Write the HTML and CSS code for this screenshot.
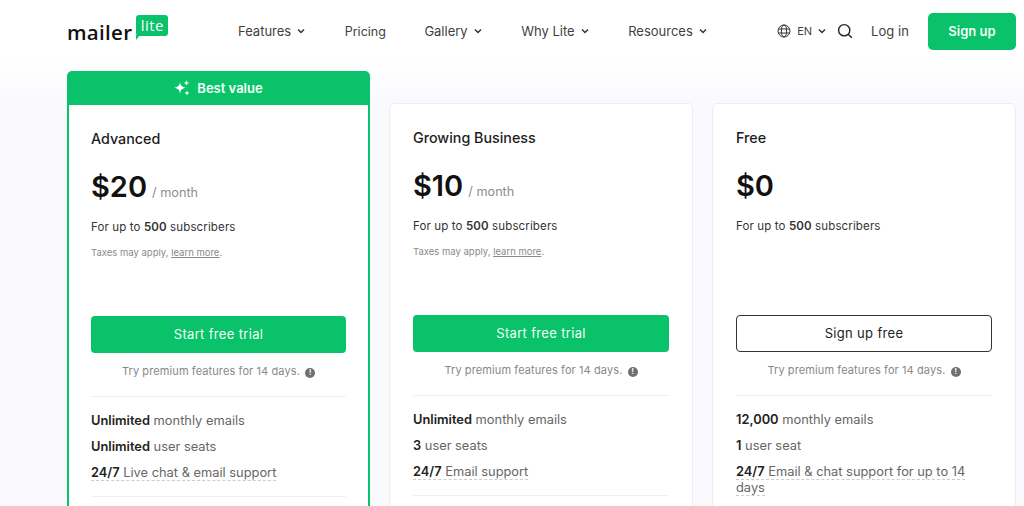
FILE: index.html
```html
<!DOCTYPE html>
<html lang="en">
<head>
<meta charset="utf-8">
<title>MailerLite pricing</title>
<link rel="stylesheet" href="styles.css">
</head>
<body>
<header class="topbar">
  <a class="logo">
    <span class="logo-word">mailer</span>
    <span class="logo-badge">lite</span>
  </a>
  <nav class="nav">
    <a class="nav-item">Features <svg class="chev" viewBox="0 0 8 6"><path d="M1 1.5 4 4.5 7 1.5"/></svg></a>
    <a class="nav-item nav-plain">Pricing</a>
    <a class="nav-item">Gallery <svg class="chev" viewBox="0 0 8 6"><path d="M1 1.5 4 4.5 7 1.5"/></svg></a>
    <a class="nav-item">Why Lite <svg class="chev" viewBox="0 0 8 6"><path d="M1 1.5 4 4.5 7 1.5"/></svg></a>
    <a class="nav-item">Resources <svg class="chev" viewBox="0 0 8 6"><path d="M1 1.5 4 4.5 7 1.5"/></svg></a>
  </nav>
  <div class="actions">
    <a class="lang">
      <svg class="globe" viewBox="0 0 14 14"><circle cx="7" cy="7" r="6"/><ellipse cx="7" cy="7" rx="2.7" ry="6"/><path d="M1.3 5h11.4M1.3 9h11.4"/></svg>
      EN
      <svg class="chev" viewBox="0 0 8 6"><path d="M1 1.5 4 4.5 7 1.5"/></svg>
    </a>
    <svg class="search" viewBox="0 0 16 16"><circle cx="7.2" cy="7.2" r="5.6"/><path d="M11.2 11.2 14.8 14.8"/></svg>
    <a class="login">Log in</a>
    <a class="signup">Sign up</a>
  </div>
</header>
<main class="plans">
  <article class="plan plan-featured">
    <div class="ribbon">
      <svg class="sparkle" viewBox="0 0 16 16"><path d="M6 2C6.600 5.800 7.800 7 12 7.800 7.800 8.600 6.600 9.800 6 14 5.400 9.800 4.200 8.600 0 7.800 4.200 7 5.400 5.800 6 2Z"/><path d="M12.500 0 13.200 2.300 15.500 3 13.200 3.700 12.500 6 11.800 3.700 9.500 3 11.800 2.300Z"/><path d="M13 10.500 13.700 12.300 15.500 13 13.700 13.700 13 15.500 12.300 13.700 10.500 13 12.300 12.300Z"/></svg>
      Best value
    </div>
    <div class="plan-body">
      <h2 class="plan-name">Advanced</h2>
      <p class="price"><span class="amount">$20</span> <span class="period">/ month</span></p>
      <p class="subs">For up to <b>500</b> subscribers</p>
      <p class="tax">Taxes may apply, <u>learn more</u>.</p>
      <a class="cta cta-green">Start free trial</a>
      <p class="trial">Try premium features for 14 days. <span class="info">!</span></p>
      <ul class="features">
        <li><b>Unlimited</b> monthly emails</li>
        <li><b>Unlimited</b> user seats</li>
        <li><span class="dotted"><b>24/7</b> Live chat &amp; email support</span></li>
      </ul>
    </div>
  </article>
  <article class="plan">
    <div class="plan-body">
      <h2 class="plan-name">Growing Business</h2>
      <p class="price"><span class="amount">$10</span> <span class="period">/ month</span></p>
      <p class="subs">For up to <b>500</b> subscribers</p>
      <p class="tax">Taxes may apply, <u>learn more</u>.</p>
      <a class="cta cta-green">Start free trial</a>
      <p class="trial">Try premium features for 14 days. <span class="info">!</span></p>
      <ul class="features">
        <li><b>Unlimited</b> monthly emails</li>
        <li><b>3</b> user seats</li>
        <li><span class="dotted"><b>24/7</b> Email support</span></li>
      </ul>
    </div>
  </article>
  <article class="plan">
    <div class="plan-body">
      <h2 class="plan-name">Free</h2>
      <p class="price"><span class="amount">$0</span></p>
      <p class="subs">For up to <b>500</b> subscribers</p>
      <p class="tax tax-empty"></p>
      <a class="cta cta-outline">Sign up free</a>
      <p class="trial">Try premium features for 14 days. <span class="info">!</span></p>
      <ul class="features">
        <li><b>12,000</b> monthly emails</li>
        <li><b>1</b> user seat</li>
        <li><span class="dotted"><b>24/7</b> Email &amp; chat support for up to 14 days</span></li>
      </ul>
    </div>
  </article>
</main>
</body>
</html>
```
FILE: styles.css
```css
* { box-sizing: border-box; }
html, body { margin: 0; height: 506px; overflow: hidden; }
body {
  font-family: Inter, "Liberation Sans", sans-serif;
  background: linear-gradient(#fff 58px, #fafafe 100px);
  color: #1d1d1d;
}
p, h2, ul { margin: 0; padding: 0; }
.topbar {
  height: 64px;
  display: flex;
  align-items: center;
  padding: 0 8px 2px 67px;
}
.logo { display: flex; align-items: flex-start; width: 171px; height: 34px; }
.logo-word {
  font: 600 20.500px/1 "Open Sans", sans-serif;
  letter-spacing: 0.3px;
  color: #111;
  margin-top: 8px;
}
.logo-badge {
  position: relative;
  width: 32px;
  height: 21px;
  margin: 1px 0 0 4px;
  background: #09c269;
  border-radius: 3px;
  color: #fff;
  font: 500 15px/20px "Open Sans", sans-serif;
  letter-spacing: 0.4px;
  text-align: center;
}
.logo-badge::after {
  content: "";
  position: absolute;
  left: 0;
  top: 20px;
  border-left: 4px solid #09c269;
  border-bottom: 5px solid transparent;
}
.nav { display: flex; align-items: center; gap: 39.500px; font-size: 13px; color: #3f3f3f; }
.nav-item { display: flex; align-items: center; gap: 6px; white-space: nowrap; }
.nav-plain { padding-top: 1px; font-size: 12.500px; margin-right: -1px; }
.chev { width: 8px; height: 6px; fill: none; stroke: #333; stroke-width: 1.5; }
.actions { display: flex; align-items: center; margin-left: auto; }
.lang { display: flex; align-items: center; gap: 6px; font-size: 11px; color: #3f3f3f; }
.globe { width: 14px; height: 14px; fill: none; stroke: #333; stroke-width: 1; }
.search { width: 16px; height: 16px; margin-left: 11px; fill: none; stroke: #222; stroke-width: 1.4; }
.login { margin-left: 18px; font-size: 13px; color: #3f3f3f; letter-spacing: 0.05px; }
.signup {
  margin-left: 19px;
  width: 88px;
  height: 37px;
  border-radius: 5px;
  background: #09c269;
  color: #f4fff9;
  font-size: 13px;
  font-weight: 600;
  line-height: 37px;
  text-align: center;
}
.plans {
  display: flex;
  align-items: flex-start;
  gap: 19px;
  padding: 7px 8px 0 67px;
}
.plan {
  flex: 0 0 304px;
  margin-top: 32px;
  background: #fff;
  border: 1px solid #eeeef2;
  border-radius: 5px;
}
.plan-featured {
  flex-basis: 303px;
  margin-top: 0;
  border: 2px solid #09c269;
}
.ribbon {
  height: 33px;
  padding-bottom: 2px;
  background: #09c269;
  color: #f4fff9;
  display: flex;
  align-items: center;
  justify-content: center;
  gap: 7px;
  font-size: 13px;
  font-weight: 600;
  margin-top: -1px;
}
.sparkle { width: 16px; height: 16px; fill: #fff; }
.plan-body { padding: 24px 23px 40px; }
.plan-featured .plan-body { padding: 24px 22px 40px; }
.plan-name { font-size: 14.300px; line-height: 20px; font-weight: 500; color: #1d1d1d; }
.price { margin-top: 18px; height: 40px; display: flex; align-items: baseline; gap: 5px; }
.amount { font-size: 29px; line-height: 40px; font-weight: 600; color: #111; }
.period { font-size: 12.700px; color: #8d8d8d; }
.subs { margin-top: 12px; font-size: 11.500px; line-height: 16px; color: #333; letter-spacing: 0.13px; }
.subs b { font-weight: 600; }
.tax { margin-top: 11px; font-size: 9.500px; line-height: 14px; color: #8a8a8a; height: 14px; }
.cta {
  display: block;
  margin-top: 56px;
  height: 37px;
  border-radius: 4px;
  font-size: 13px;
  line-height: 37px;
  text-align: center;
  letter-spacing: 0.33px;
}
.cta-green { background: #09c269; color: #f4fff9; }
.cta-outline { border: 1px solid #333; line-height: 35px; color: #222; background: #fff; }
.trial {
  margin-top: 10px;
  padding-bottom: 17px;
  border-bottom: 1px solid #f0f0f2;
  font-size: 11px;
  line-height: 16px;
  color: #888;
  text-align: center;
  letter-spacing: 0.1px;
}
.info {
  display: inline-block;
  width: 10px;
  height: 10px;
  margin-left: 2px;
  border-radius: 50%;
  background: #6f6f6f;
  color: #fff;
  font-size: 7px;
  font-weight: 700;
  line-height: 10px;
  letter-spacing: 0;
  vertical-align: 0;
}
.features {
  list-style: none;
  padding: 16px 0 15px;
  border-bottom: 1px solid #f0f0f2;
  font-size: 12.850px;
  line-height: 16px;
  color: #666;
  display: flex;
  flex-direction: column;
  gap: 10px;
}
.features b { font-weight: 600; color: #222; }
.dotted { border-bottom: 1px dashed #ccc; }
```
